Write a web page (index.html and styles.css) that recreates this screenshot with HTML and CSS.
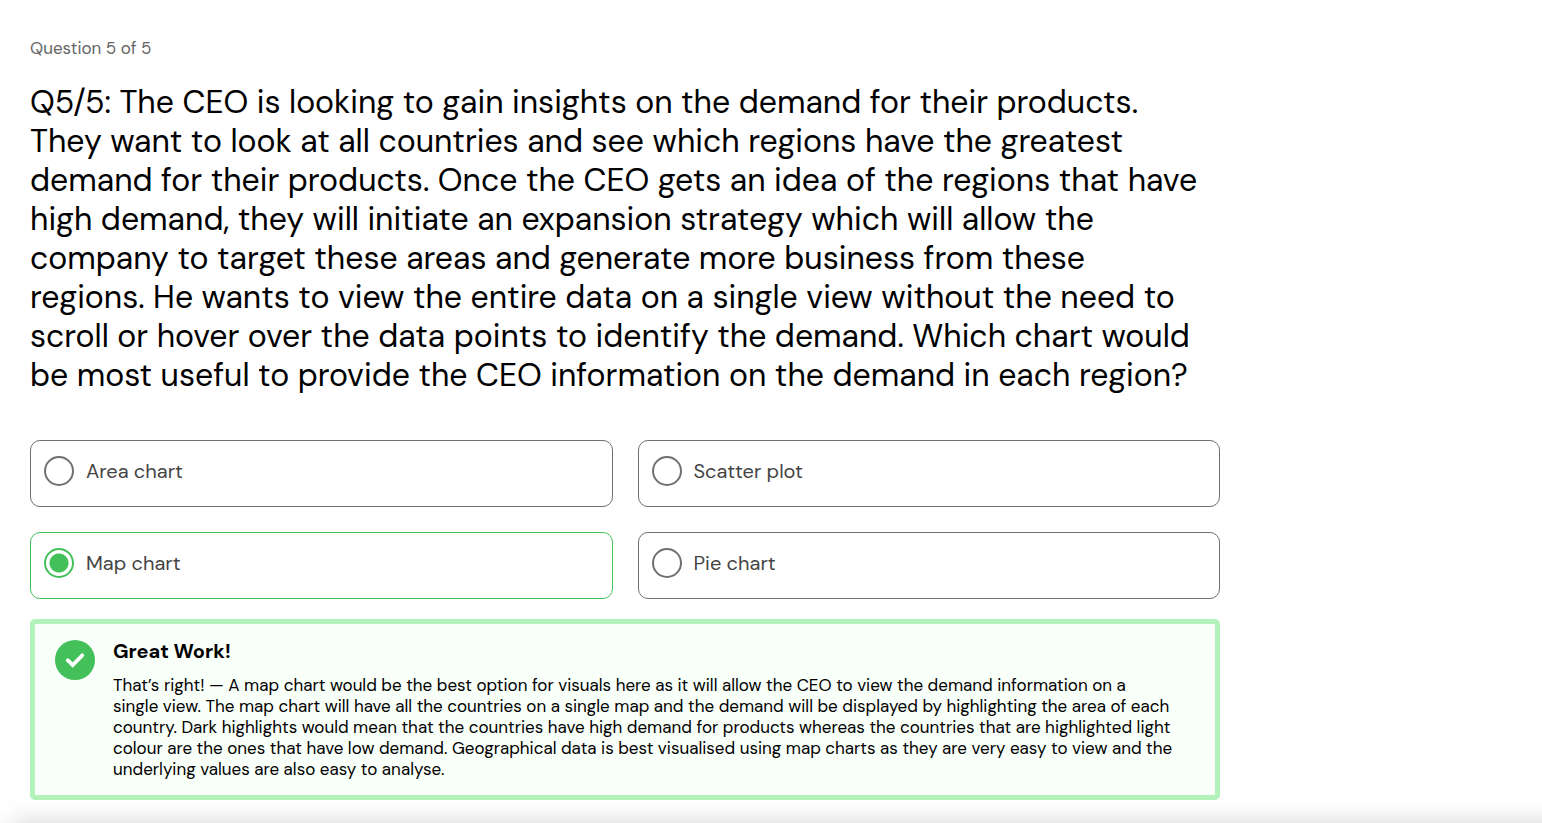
FILE: index.html
```html
<!DOCTYPE html>
<html lang="en">
<head>
<meta charset="utf-8">
<title>Question 5 of 5</title>
<meta name="viewport" content="width=device-width, initial-scale=1">
<link rel="stylesheet" href="styles.css">
</head>
<body>
<main class="quiz">
  <p class="progress">Question 5 of 5</p>
  <form>
    <fieldset class="question">
      <legend class="prompt">Q5/5: The CEO is looking to gain insights on the demand for their products.<br>They want to look at all countries and see which regions have the greatest<br>demand for their products. Once the CEO gets an idea of the regions that have<br>high demand, they will initiate an expansion strategy which will allow the<br>company to target these areas and generate more business from these<br>regions. He wants to view the entire data on a single view without the need to<br>scroll or hover over the data points to identify the demand. Which chart would<br>be most useful to provide the CEO information on the demand in each region?</legend>
      <div class="options">
        <label class="option"><input class="radio" type="radio" name="chart" value="area">Area chart</label>
        <label class="option"><input class="radio" type="radio" name="chart" value="scatter">Scatter plot</label>
        <label class="option"><input class="radio" type="radio" name="chart" value="map" checked>Map chart</label>
        <label class="option"><input class="radio" type="radio" name="chart" value="pie">Pie chart</label>
      </div>
    </fieldset>
  </form>
  <section class="feedback">
    <svg class="tick" viewBox="0 0 40 40" aria-hidden="true"><circle cx="20" cy="20" r="20" fill="#43c059"/><path d="M12.7 20.2l5 4.8 9.6-9.7" fill="none" stroke="#fff" stroke-width="3.8" stroke-linecap="round" stroke-linejoin="miter"/></svg>
    <div class="message">
      <h2 class="title">Great Work!</h2>
      <p class="text">That’s right! — A map chart would be the best option for visuals here as it will allow the CEO to view the demand information on a<br>single view. The map chart will have all the countries on a single map and the demand will be displayed by highlighting the area of each<br>country. Dark highlights would mean that the countries have high demand for products whereas the countries that are highlighted light<br>colour are the ones that have low demand. Geographical data is best visualised using map charts as they are very easy to view and the<br>underlying values are also easy to analyse.</p>
    </div>
  </section>
</main>
<div class="bottom-shade"></div>
</body>
</html>
```

FILE: styles.css
```css
* { box-sizing: border-box; }
body { margin: 0; background: #fff; color: #000; font-family: "DM Sans", Inter, "Open Sans", sans-serif; }
.quiz { max-width: 1250px; padding: 36px 30px 0; }
.progress { margin: 0 0 23px; color: #666; font-size: 17px; line-height: 24px; }
.question { margin: 0; padding: 0; border: 0; min-width: 0; }
.prompt { padding: 0; margin: 0 0 45px; font-size: 32px; line-height: 39px; white-space: nowrap; }
.options { display: grid; grid-template-columns: 1fr 1fr; gap: 25px; }
.option { display: flex; gap: 12px; min-height: 67px; padding: 15px 13px; border: 1px solid #707070; border-radius: 10px; color: #444; font-size: 20px; line-height: 30px; }
.option:has(:checked) { border-color: #43c059; }
.radio { appearance: none; flex: none; width: 30px; height: 30px; margin: 0; border: 2px solid #707070; border-radius: 50%; }
.radio:checked { border-color: #43c059; background: radial-gradient(circle, #43c059 0 8px, #43c059 9px, transparent 10px); }
.feedback { display: flex; gap: 18px; margin-top: 20px; padding: 16px 12px 15px 20px; border: 5px solid #b3f2bb; border-radius: 5px; background: #f9fff9; }
.tick { flex: none; width: 40px; height: 40px; }
.title { margin: 0 0 13px; font-size: 20px; line-height: 22px; font-weight: 700; }
.text { margin: 0; font-size: 17px; line-height: 21px; white-space: nowrap; }
.bottom-shade { position: fixed; inset: 100% -40px auto 12px; height: 80px; box-shadow: 0 0 24px #0000002e; }
```
